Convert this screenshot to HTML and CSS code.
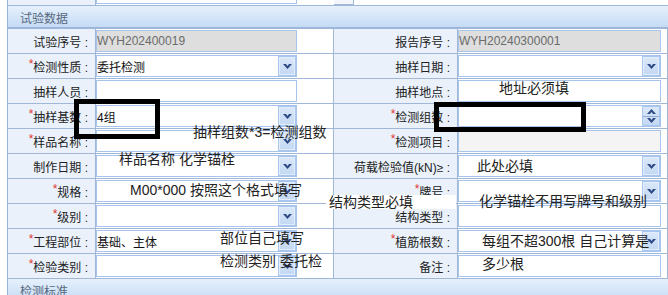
FILE: index.html
```html
<!DOCTYPE html>
<html lang="zh-CN">
<head>
    <meta charset="UTF-8">
    <title>试验数据</title>
    <link rel="stylesheet" href="styles.css">
</head>
<body>
<div class="page">
    <div class="panel">
        <!-- 上一行（被截断） -->
        <div class="prev-row">
            <div class="prev-label"></div>
            <div class="prev-cell"><div class="prev-input"></div></div>
            <div class="prev-cell"><div class="prev-box"></div></div>
            <div></div>
        </div>

        <div class="section-title">试验数据</div>

        <div class="form-grid">
            <div class="label">试验序号 :</div>
            <div class="field"><div class="input readonly">WYH202400019</div></div>
            <div class="label">报告序号 :</div>
            <div class="field"><div class="input wide readonly">WYH20240300001</div></div>

            <div class="label"><span class="req">*</span>检测性质 :</div>
            <div class="field"><div class="input"><span class="value">委托检测</span><span class="trigger"><svg width="9" height="5" viewBox="0 0 9 5"><path d="M0 0H3L4.5 2L6 0H9L4.5 5Z"/></svg></span></div></div>
            <div class="label">抽样日期 :</div>
            <div class="field"><div class="input wide"><span class="value"></span><span class="trigger"><svg width="9" height="5" viewBox="0 0 9 5"><path d="M0 0H3L4.5 2L6 0H9L4.5 5Z"/></svg></span></div></div>

            <div class="label">抽样人员 :</div>
            <div class="field"><div class="input"></div></div>
            <div class="label">抽样地点 :</div>
            <div class="field"><div class="input wide"></div></div>

            <div class="label"><span class="req">*</span>抽样基数 :</div>
            <div class="field"><div class="input"><span class="value">4组</span><span class="trigger"><svg width="9" height="5" viewBox="0 0 9 5"><path d="M0 0H3L4.5 2L6 0H9L4.5 5Z"/></svg></span></div></div>
            <div class="label"><span class="req">*</span>检测组数 :</div>
            <div class="field"><div class="input wide"><span class="value"></span><span class="spinner"><span class="spin-up"><svg width="9" height="5" viewBox="0 0 9 5"><path d="M0 5H3L4.5 3L6 5H9L4.5 0Z"/></svg></span><span class="spin-down"><svg width="9" height="5" viewBox="0 0 9 5"><path d="M0 0H3L4.5 2L6 0H9L4.5 5Z"/></svg></span></span></div></div>

            <div class="label"><span class="req">*</span>样品名称 :</div>
            <div class="field"><div class="input"><span class="value"></span><span class="trigger"><svg width="9" height="5" viewBox="0 0 9 5"><path d="M0 0H3L4.5 2L6 0H9L4.5 5Z"/></svg></span></div></div>
            <div class="label"><span class="req">*</span>检测项目 :</div>
            <div class="field"><div class="input wide disabled"></div></div>

            <div class="label">制作日期 :</div>
            <div class="field"><div class="input"><span class="value"></span><span class="trigger"><svg width="9" height="5" viewBox="0 0 9 5"><path d="M0 0H3L4.5 2L6 0H9L4.5 5Z"/></svg></span></div></div>
            <div class="label">荷载检验值(kN)≥ :</div>
            <div class="field"><div class="input wide"><span class="value"></span><span class="trigger"><svg width="9" height="5" viewBox="0 0 9 5"><path d="M0 0H3L4.5 2L6 0H9L4.5 5Z"/></svg></span></div></div>

            <div class="label"><span class="req">*</span>规格 :</div>
            <div class="field"><div class="input"><span class="value"></span><span class="trigger"><svg width="9" height="5" viewBox="0 0 9 5"><path d="M0 0H3L4.5 2L6 0H9L4.5 5Z"/></svg></span></div></div>
            <div class="label"><span class="req">*</span>牌号 :</div>
            <div class="field"><div class="input wide"><span class="value"></span><span class="trigger"><svg width="9" height="5" viewBox="0 0 9 5"><path d="M0 0H3L4.5 2L6 0H9L4.5 5Z"/></svg></span></div></div>

            <div class="label"><span class="req">*</span>级别 :</div>
            <div class="field"><div class="input"><span class="value"></span><span class="trigger"><svg width="9" height="5" viewBox="0 0 9 5"><path d="M0 0H3L4.5 2L6 0H9L4.5 5Z"/></svg></span></div></div>
            <div class="label">结构类型 :</div>
            <div class="field"><div class="input wide"></div></div>

            <div class="label"><span class="req">*</span>工程部位 :</div>
            <div class="field"><div class="input"><span class="value">基础、主体</span><span class="trigger"><svg width="9" height="5" viewBox="0 0 9 5"><path d="M0 0H3L4.5 2L6 0H9L4.5 5Z"/></svg></span></div></div>
            <div class="label"><span class="req">*</span>植筋根数 :</div>
            <div class="field"><div class="input wide"><span class="value"></span><span class="trigger"><svg width="9" height="5" viewBox="0 0 9 5"><path d="M0 0H3L4.5 2L6 0H9L4.5 5Z"/></svg></span></div></div>

            <div class="label"><span class="req">*</span>检验类别 :</div>
            <div class="field"><div class="input"><span class="value"></span><span class="trigger"><svg width="9" height="5" viewBox="0 0 9 5"><path d="M0 0H3L4.5 2L6 0H9L4.5 5Z"/></svg></span></div></div>
            <div class="label">备注 :</div>
            <div class="field"><div class="input wide"></div></div>
        </div>

        <div class="section-title">检测标准</div>
    </div>

    <!-- 截图上的批注 -->
    <div class="mark mark-base"></div>
    <div class="mark mark-count"></div>

    <span class="note note-addr">地址必须填</span>
    <span class="note note-count">抽样组数*3=检测组数</span>
    <span class="note note-name">样品名称 化学锚栓</span>
    <span class="note note-spec">M00*000 按照这个格式填写</span>
    <span class="note note-load">此处必填</span>
    <span class="note note-struct">结构类型必填</span>
    <span class="note note-grade">化学锚栓不用写牌号和级别</span>
    <span class="note note-part">部位自己填写</span>
    <span class="note note-type">检测类别 委托检</span>
    <span class="note note-bars">每组不超300根 自己计算是</span>
    <span class="note note-bars2">多少根</span>
</div>
</body>
</html>
```

FILE: styles.css
```css
* {
    box-sizing: border-box;
}

body {
    margin: 0;
    background: #fff;
    font-family: 'Liberation Sans', 'Noto Sans CJK SC', sans-serif;
    font-size: 12px;
    color: #1f1f1f;
}

.page {
    position: relative;
    width: 668px;
    height: 295px;
    overflow: hidden;
}

/* 面板 */
.panel {
    margin-left: 7px;
    border-left: 1px solid #99b5da;
}

/* 上一行 */
.prev-row {
    display: grid;
    grid-template-columns: 88px 238px 124px 1fr;
    height: 6px;
    border-bottom: 1px solid #9db8dc;
}

.prev-label {
    background: #eaf1fb;
    border-right: 1px solid #a0b7d8;
}

.prev-input {
    width: 201px;
    height: 4px;
    border: 1px solid #a6c4ec;
    border-top: none;
}

.prev-box {
    width: 20px;
    height: 5px;
    background: #f3f7fd;
    border-right: 1px solid #a0b7d8;
    border-bottom: 1px solid #a0b7d8;
}

/* 分组标题 */
.section-title {
    height: 22px;
    padding: 4px 0 0 12px;
    background: linear-gradient(to bottom, #e6f0fc 0%, #d6e6f9 50%, #c6dbf4 100%);
    border-bottom: 1px solid #9ab6dc;
    color: #56697f;
    font-family: 'Noto Sans CJK SC', sans-serif;
    line-height: 16px;
}

/* 表单 */
.form-grid {
    display: grid;
    grid-template-columns: 88px 238px 124px 1fr;
    grid-auto-rows: 25px;
    border-top: 1px solid #a0b7d8;
}

.label {
    display: flex;
    align-items: center;
    justify-content: flex-end;
    padding-right: 7px;
    background: #eaf1fb;
    border-right: 1px solid #a0b7d8;
    border-bottom: 1px solid #a0b7d8;
    white-space: nowrap;
    color: #222;
}

.req {
    color: #e3342f;
    align-self: flex-start;
    margin-top: 6px;
    line-height: 8px;
}

.field {
    display: flex;
    align-items: center;
    border-right: 1px solid #a0b7d8;
    border-bottom: 1px solid #a0b7d8;
    background: #fff;
}

.input {
    display: flex;
    align-items: center;
    width: 201px;
    height: 22px;
    border: 1px solid #a6c4ec;
    background: #fff;
    font-family: 'Liberation Sans', 'Noto Sans CJK SC', sans-serif;
    color: #111;
    white-space: nowrap;
}

.input.wide {
    width: 203px;
}

.input.readonly {
    background: #dedede;
    color: #6b6b6b;
}

.input.disabled {
    background: #f4f4f4;
}

.value {
    flex: 1;
}

/* 下拉按钮 */
.trigger {
    display: flex;
    align-items: center;
    justify-content: center;
    width: 18px;
    height: 20px;
    border: 1px solid #a9c6ee;
    box-shadow: inset 0 0 0 1px #e3edfb;
    background: linear-gradient(to bottom, #dbe8f9 0%, #c3d8f3 100%);
}

.trigger svg,
.spinner svg {
    fill: #2d4a86;
}

.spinner {
    display: flex;
    flex-direction: column;
    width: 18px;
    height: 20px;
    border: 1px solid #a9c6ee;
    background: linear-gradient(to bottom, #dbe8f9 0%, #c3d8f3 100%);
}

.spin-up,
.spin-down {
    flex: 1;
    display: flex;
    align-items: center;
    justify-content: center;
}

.spin-up {
    border-bottom: 1px solid #8fabd6;
}

/* 批注 */
.mark {
    position: absolute;
    border: 5px solid #000;
}

.mark-base {
    left: 74px;
    top: 99px;
    width: 86px;
    height: 40px;
}

.mark-count {
    left: 434px;
    top: 102px;
    width: 152px;
    height: 30px;
}

.note {
    position: absolute;
    font-family: 'Liberation Sans', 'Noto Sans CJK SC', sans-serif;
    font-size: 14px;
    line-height: 16px;
    color: #222;
    white-space: nowrap;
}

.note-addr { left: 499px; top: 80px; }
.note-count { left: 193px; top: 124px; }
.note-name { left: 119px; top: 151px; }
.note-spec { left: 130px; top: 182px; }
.note-load { left: 477px; top: 158px; }
.note-struct {
    left: 326px;
    top: 195px;
    width: 130px;
    height: 14px;
    padding-left: 3px;
    line-height: 14px;
    background: #fff;
}
.note-grade { left: 479px; top: 193px; }
.note-part { left: 220px; top: 230px; }
.note-type { left: 220px; top: 253px; }
.note-bars { left: 482px; top: 233px; }
.note-bars2 { left: 482px; top: 256px; }
```
